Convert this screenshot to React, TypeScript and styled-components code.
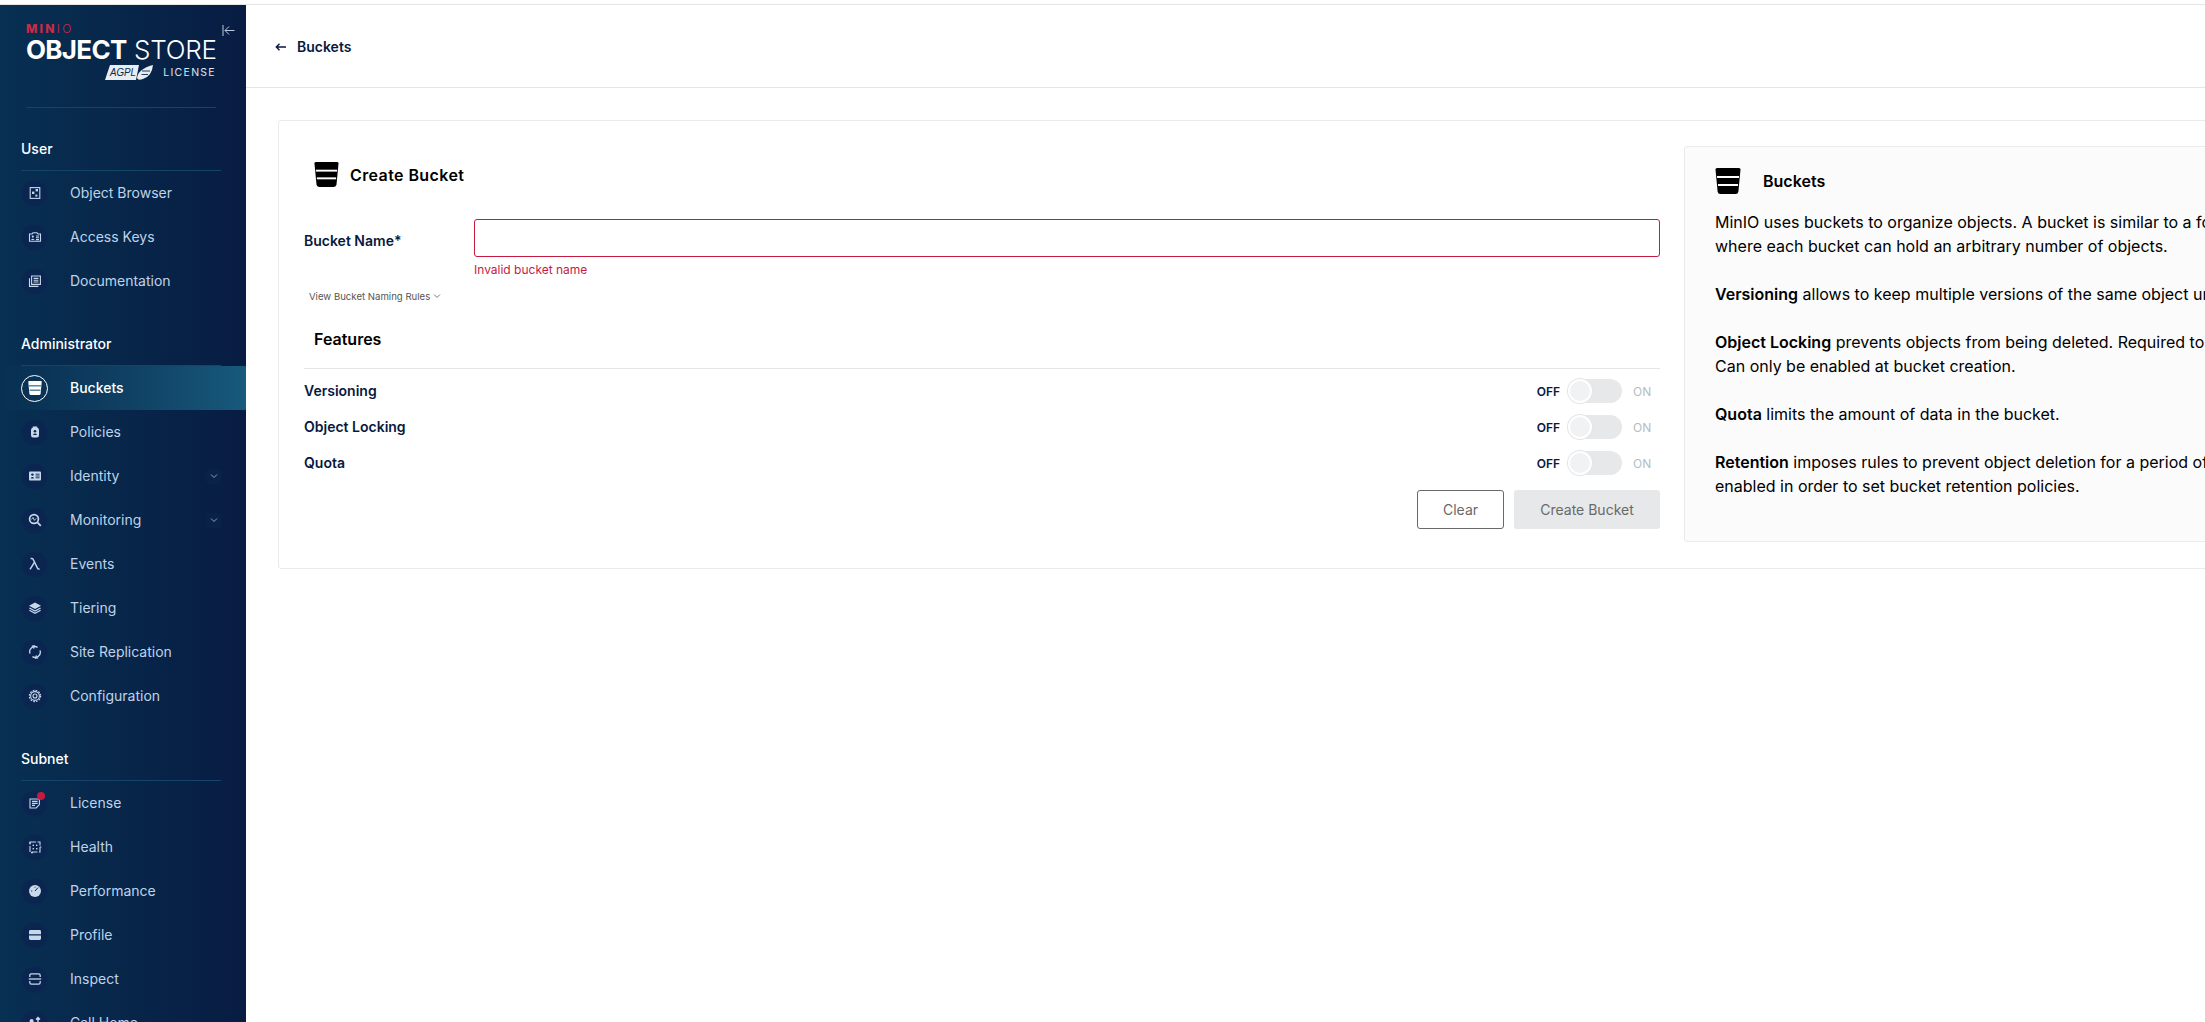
import React from 'react';
import styled, { createGlobalStyle } from 'styled-components';

const GlobalStyle = createGlobalStyle`
  html, body {
    margin: 0;
    padding: 0;
    height: 100%;
    overflow: hidden;
    background: #fff;
  }
  body {
    font-family: 'Inter', 'Liberation Sans', sans-serif;
  }
  * {
    box-sizing: border-box;
  }
`;

const BucketIcon: React.FC<{ size?: number; color?: string; line?: string }> = ({
  size = 26,
  color = '#000',
  line = '#fff',
}) => (
  <svg width={size} height={size} viewBox="0 0 26 26">
    <path
      d="M0.500 1.500 Q0.500 0 2 0 H24 Q25.500 0 25.500 1.500 L23.400 23.500 Q23.100 26 20.500 26 H5.500 Q2.900 26 2.600 23.500 Z"
      fill={color}
    />
    <rect x="2" y="8" width="22" height="2" fill={line} />
    <rect x="3" y="16" width="20" height="2" fill={line} />
  </svg>
);

const Svg: React.FC<{ children: React.ReactNode }> = ({ children }) => (
  <svg width="14" height="14" viewBox="0 0 14 14" fill="none" stroke="currentColor" strokeWidth="1.1">
    {children}
  </svg>
);

const icons: Record<string, React.ReactNode> = {
  browser: (
    <Svg>
      <rect x="2.200" y="1.600" width="9.600" height="10.800" />
      <g fill="currentColor" stroke="none">
        <rect x="7.600" y="3" width="2.400" height="2.400" />
        <rect x="4" y="5.600" width="2.400" height="2.400" />
        <rect x="7.400" y="8.600" width="2" height="2" />
      </g>
    </Svg>
  ),
  keys: (
    <Svg>
      <path d="M1.500 4 H4 L5 2.800 H9 L10 4 H12.500 V11.200 H1.500 Z" />
      <circle cx="4.800" cy="6.600" r="1.100" fill="currentColor" stroke="none" />
      <path d="M3 10 Q4.800 7.600 6.600 10 Z" fill="currentColor" stroke="none" />
      <path d="M8 6 H11 M8 7.800 H11 M8 9.600 H11" />
    </Svg>
  ),
  docs: (
    <Svg>
      <path d="M3.600 2 H12.400 V10.400 H3.600 Z" />
      <path d="M1.500 4.200 V12.400 H10.400" />
      <path d="M5.600 4.400 H10.400 M5.600 6.200 H10.400 M5.600 8 H10.400" />
    </Svg>
  ),
  policies: (
    <Svg>
      <path
        d="M4.800 2.600 V1.400 H9.200 V2.600 Q11 3.200 11 5 V10 Q11 12.600 9 12.600 H5 Q3 12.600 3 10 V5 Q3 3.200 4.800 2.600 Z"
        fill="currentColor"
        stroke="none"
      />
      <circle cx="7" cy="6.200" r="1.300" fill="#0a2650" stroke="none" />
      <path d="M4.800 10 Q7 7.200 9.200 10 Z" fill="#0a2650" stroke="none" />
    </Svg>
  ),
  identity: (
    <Svg>
      <rect x="1" y="2.600" width="12" height="8.800" rx="1" fill="currentColor" stroke="none" />
      <circle cx="4.400" cy="5.600" r="1.200" fill="#0a2650" stroke="none" />
      <path d="M2.600 9.400 Q4.400 6.600 6.200 9.400 Z" fill="#0a2650" stroke="none" />
      <path d="M7.600 5.200 H11.600 M7.600 7 H11.600 M7.600 8.800 H11.600" stroke="#0a2650" strokeWidth="0.9" />
    </Svg>
  ),
  monitoring: (
    <Svg>
      <circle cx="6" cy="6" r="4.400" strokeWidth="1.7" />
      <path d="M9.400 9.400 L12.800 12.800" strokeWidth="1.8" />
      <path d="M3.600 6.400 L5 4.400 L6.400 7.400 L8.200 5.400" strokeWidth="0.9" />
    </Svg>
  ),
  events: (
    <Svg>
      <path d="M2.600 1.600 H4 Q5 1.600 5.500 3 L9.400 11 Q10 12.400 11.600 12" strokeWidth="1.5" />
      <path d="M6.400 5.400 L2 12.400" strokeWidth="1.5" />
    </Svg>
  ),
  tiering: (
    <Svg>
      <path d="M7 1.600 L13 4.800 L7 8 L1 4.800 Z" fill="currentColor" stroke="none" />
      <path d="M1.400 7 L7 10 L12.600 7" strokeWidth="1.3" />
      <path d="M1.400 9.200 L7 12.200 L12.600 9.200" strokeWidth="1.3" />
    </Svg>
  ),
  replication: (
    <Svg>
      <path d="M2 8.600 A5.200 5.200 0 0 1 9.600 2.400" strokeWidth="1.3" />
      <path d="M12 5.400 A5.200 5.200 0 0 1 4.400 11.600" strokeWidth="1.3" />
      <path d="M3.800 1.200 L6.400 1 L5.600 3.600 M10.200 12.800 L7.600 13 L8.400 10.400" strokeWidth="1.2" />
    </Svg>
  ),
  configuration: (
    <Svg>
      <circle cx="7" cy="7" r="2" />
      <circle cx="7" cy="7" r="4.400" strokeWidth="1.1" />
      <circle cx="7" cy="7" r="5.600" strokeWidth="1.2" strokeDasharray="1.6 1.33" />
    </Svg>
  ),
  license: (
    <Svg>
      <path d="M2 3 H11.400 V8.600 L8.200 12 H2 Z" />
      <path d="M4 5.400 H9.600 M4 7.400 H9.600 M4 9.400 H7" />
    </Svg>
  ),
  health: (
    <Svg>
      <path d="M2 2 H12 V12 H2 Z" strokeDasharray="6 1.500" />
      <path d="M1 3 H3 M12 7 H13.400 M3 12.600 H5" />
      <g fill="currentColor" stroke="none">
        <rect x="4.600" y="4.600" width="1.400" height="1.400" />
        <rect x="8" y="4.600" width="1.400" height="1.400" />
        <rect x="4.600" y="8" width="1.400" height="1.400" />
        <rect x="8" y="8" width="1.400" height="1.400" />
      </g>
    </Svg>
  ),
  performance: (
    <Svg>
      <circle cx="7" cy="7" r="6" fill="currentColor" stroke="none" />
      <path d="M7 7 L10 3.600" stroke="#0a2650" strokeWidth="1" />
      <path d="M3 7 H4.200 M7 2.800 V3.800" stroke="#0a2650" strokeWidth="0.8" />
    </Svg>
  ),
  profile: (
    <Svg>
      <path d="M1 6.200 V3.400 Q1 2 2.400 2 H11.600 Q13 2 13 3.400 V6.200 Z" fill="currentColor" stroke="none" />
      <path d="M1 7.600 H13 V10.600 Q13 12 11.600 12 H2.400 Q1 12 1 10.600 Z" fill="currentColor" stroke="none" />
    </Svg>
  ),
  inspect: (
    <Svg>
      <path d="M1.800 5 V3.400 Q1.800 1.800 3.400 1.800 H10.600 Q12.200 1.800 12.200 3.400 V5" strokeWidth="1.3" />
      <path d="M1.800 9 V10.600 Q1.800 12.200 3.400 12.200 H10.600 Q12.200 12.200 12.200 10.600 V9" strokeWidth="1.3" />
      <path d="M0.800 7 H13.200" strokeWidth="1.3" />
    </Svg>
  ),
  callhome: (
    <Svg>
      <circle cx="3.600" cy="5" r="2" fill="currentColor" stroke="none" />
      <path d="M10 1.400 V8 M8 3.400 L10 1.400 L12 3.400" strokeWidth="1.4" />
      <path d="M1 12 Q3.600 7 6.400 12 Z" fill="currentColor" stroke="none" />
    </Svg>
  ),
};

type NavEntry = { label: string; icon: string; active?: boolean; expandable?: boolean; badge?: boolean };

const sections: { title: string; items: NavEntry[] }[] = [
  {
    title: 'User',
    items: [
      { label: 'Object Browser', icon: 'browser' },
      { label: 'Access Keys', icon: 'keys' },
      { label: 'Documentation', icon: 'docs' },
    ],
  },
  {
    title: 'Administrator',
    items: [
      { label: 'Buckets', icon: 'buckets', active: true },
      { label: 'Policies', icon: 'policies' },
      { label: 'Identity', icon: 'identity', expandable: true },
      { label: 'Monitoring', icon: 'monitoring', expandable: true },
      { label: 'Events', icon: 'events' },
      { label: 'Tiering', icon: 'tiering' },
      { label: 'Site Replication', icon: 'replication' },
      { label: 'Configuration', icon: 'configuration' },
    ],
  },
  {
    title: 'Subnet',
    items: [
      { label: 'License', icon: 'license', badge: true },
      { label: 'Health', icon: 'health' },
      { label: 'Performance', icon: 'performance' },
      { label: 'Profile', icon: 'profile' },
      { label: 'Inspect', icon: 'inspect' },
      { label: 'Call Home', icon: 'callhome' },
    ],
  },
];

const features = ['Versioning', 'Object Locking', 'Quota'];

const App: React.FC = () => {
  return (
    <Page>
      <GlobalStyle />
      <Sidebar>
        <LogoBlock>
          <CollapseButton>
            <svg width="13" height="13" viewBox="0 0 13 13" fill="none" stroke="#b9cbdd" strokeWidth="1">
              <path d="M1 1 V12 M12.500 6.500 H3 M7 2.500 L3 6.500 L7 10.500" />
            </svg>
          </CollapseButton>
          <MinioMark>
            MIN<MinioLight>IO</MinioLight>
          </MinioMark>
          <ProductName>
            <strong>OBJECT</strong> <span>STORE</span>
          </ProductName>
          <LicenseRow>
            <svg width="49" height="17" viewBox="0 0 49 17">
              <path d="M5 1 H34 L31 16 H0 Z" fill="#e8edf2" />
              <text
                x="5"
                y="12"
                fontFamily="Liberation Sans"
                fontStyle="italic"
                fontSize="11.5"
                textLength="26"
                lengthAdjust="spacingAndGlyphs"
                fill="#0a2a4e"
              >
                AGPL
              </text>
              <path d="M32 14 Q33 5 48 1 Q47 12 38 15 Q33 17 32 14 Z" fill="#e8edf2" />
              <path d="M37 7 H45 M36.500 10.500 H43" stroke="#0a2a4e" strokeWidth="0.9" />
            </svg>
            <LicenseText>LICENSE</LicenseText>
          </LicenseRow>
        </LogoBlock>

        {sections.map((section) => (
          <NavSection key={section.title}>
            <SectionTitle>{section.title}</SectionTitle>
            {section.items.map((item) => (
              <NavItem key={item.label} $active={item.active}>
                <IconCircle $active={item.active}>
                  {item.icon === 'buckets' ? (
                    <BucketIcon size={14} color="#fff" line="#175a7c" />
                  ) : (
                    icons[item.icon]
                  )}
                  {item.badge && <Badge />}
                </IconCircle>
                <NavLabel $active={item.active}>{item.label}</NavLabel>
                {item.expandable && (
                  <Expander>
                    <svg width="8" height="8" viewBox="0 0 8 8" fill="none" stroke="#aebfd2" strokeWidth="0.8">
                      <path d="M1 2.500 L4 5.500 L7 2.500" />
                    </svg>
                  </Expander>
                )}
              </NavItem>
            ))}
          </NavSection>
        ))}
      </Sidebar>

      <Main>
        <PageHeader>
          <BackLink>
            <svg width="11" height="8" viewBox="0 0 11 8" fill="none" stroke="#07193e" strokeWidth="1.4">
              <path d="M11 4 H1.500 M4.500 0.800 L1.300 4 L4.500 7.200" />
            </svg>
            Buckets
          </BackLink>
        </PageHeader>

        <Content>
          <Card>
            <FormColumn>
              <FormTitle>
                <BucketIcon size={25} />
                Create Bucket
              </FormTitle>

              <NameRow>
                <FieldLabel>Bucket Name*</FieldLabel>
                <FieldColumn>
                  <TextInput type="text" />
                  <FieldError>Invalid bucket name</FieldError>
                </FieldColumn>
              </NameRow>

              <RulesToggle>
                View Bucket Naming Rules
                <svg width="8" height="8" viewBox="0 0 8 8" fill="none" stroke="#555" strokeWidth="0.8">
                  <path d="M1 2.500 L4 5.500 L7 2.500" />
                </svg>
              </RulesToggle>

              <FeaturesTitle>Features</FeaturesTitle>

              <FeatureList>
                {features.map((feature) => (
                  <FeatureRow key={feature}>
                    <FeatureLabel>{feature}</FeatureLabel>
                    <SwitchGroup>
                      <OffLabel>OFF</OffLabel>
                      <SwitchTrack>
                        <SwitchKnob />
                      </SwitchTrack>
                      <OnLabel>ON</OnLabel>
                    </SwitchGroup>
                  </FeatureRow>
                ))}
              </FeatureList>

              <ButtonRow>
                <ClearButton type="button">Clear</ClearButton>
                <CreateButton type="button">Create Bucket</CreateButton>
              </ButtonRow>
            </FormColumn>

            <HelpBox>
              <HelpTitle>
                <BucketIcon />
                Buckets
              </HelpTitle>
              <HelpText>
                MinIO uses buckets to organize objects. A bucket is similar to a folder or directory in a filesystem,
                <br />
                where each bucket can hold an arbitrary number of objects.
              </HelpText>
              <HelpText>
                <b>Versioning</b> allows to keep multiple versions of the same object under the same key.
              </HelpText>
              <HelpText>
                <b>Object Locking</b> prevents objects from being deleted. Required to support retention and legal hold.
                <br />
                Can only be enabled at bucket creation.
              </HelpText>
              <HelpText>
                <b>Quota</b> limits the amount of data in the bucket.
              </HelpText>
              <HelpText>
                <b>Retention</b> imposes rules to prevent object deletion for a period of time. Versioning must be
                <br />
                enabled in order to set bucket retention policies.
              </HelpText>
            </HelpBox>
          </Card>
        </Content>
      </Main>
    </Page>
  );
};

export default App;

const Page = styled.div`
  display: flex;
  height: 100vh;
  padding-top: 4px;
  overflow: hidden;
  background: linear-gradient(#fff 0 4px, #e5e5e5 4px 5px, transparent 5px);
`;

const Sidebar = styled.aside`
  flex: none;
  width: 246px;
  margin-top: 1px;
  overflow: hidden;
  color: #fff;
  background: linear-gradient(90deg, #073052 0%, #081c42 100%);
`;

const LogoBlock = styled.div`
  position: relative;
  height: 125px;
  padding: 19px 30px 0 26px;
  display: flex;
  flex-direction: column;
  &::after {
    content: '';
    position: absolute;
    left: 26px;
    right: 30px;
    bottom: 22px;
    height: 1px;
    background: #14446a;
  }
`;

const CollapseButton = styled.div`
  position: absolute;
  top: 19px;
  left: 222px;
  line-height: 0;
`;

const MinioMark = styled.div`
  font-size: 12px;
  line-height: 10px;
  font-weight: 800;
  letter-spacing: 2.3px;
  color: #c72c48;
`;

const MinioLight = styled.span`
  font-weight: 300;
`;

const ProductName = styled.div`
  margin-top: 1px;
  font-size: 26px;
  line-height: 29px;
  white-space: nowrap;
  strong {
    font-weight: 700;
    letter-spacing: -0.7px;
  }
  span {
    font-weight: 300;
    letter-spacing: -0.2px;
  }
`;

const LicenseRow = styled.div`
  display: flex;
  justify-content: flex-end;
  align-items: center;
  gap: 9px;
`;

const LicenseText = styled.span`
  font-size: 10.5px;
  letter-spacing: 1.3px;
  color: #dfe6ee;
`;

const NavSection = styled.section`
  & + & {
    margin-top: 22px;
  }
`;

const SectionTitle = styled.div`
  display: flex;
  align-items: center;
  height: 41px;
  margin: 0 25px 0 21px;
  padding-bottom: 3px;
  font-size: 14px;
  font-weight: 500;
  color: #fff;
  border-bottom: 1px solid #14446a;
`;

const NavItem = styled.div<{ $active?: boolean }>`
  position: relative;
  display: flex;
  align-items: center;
  height: 44px;
  padding: 0 25px 0 21px;
  background: ${(p) =>
    p.$active ? 'linear-gradient(90deg, rgba(23, 90, 124, 0) 0%, #175a7c 100%)' : 'transparent'};
`;

const IconCircle = styled.div<{ $active?: boolean }>`
  position: relative;
  flex: none;
  display: flex;
  align-items: center;
  justify-content: center;
  width: 27px;
  height: 27px;
  border-radius: 50%;
  color: #c7d8ea;
  background: ${(p) => (p.$active ? 'transparent' : '#0a2650')};
  border: ${(p) => (p.$active ? '1px solid #fff' : '1px solid #0b2a52')};
`;

const Badge = styled.span`
  position: absolute;
  top: 1px;
  right: 2px;
  width: 8px;
  height: 8px;
  border-radius: 50%;
  background: #c51b3f;
`;

const NavLabel = styled.span<{ $active?: boolean }>`
  margin: 0 0 1px 22px;
  font-size: 14px;
  font-weight: ${(p) => (p.$active ? 500 : 400)};
  color: ${(p) => (p.$active ? '#fff' : '#bfd3e8')};
`;

const Expander = styled.span`
  margin-left: auto;
  display: flex;
  align-items: center;
  justify-content: center;
  width: 15px;
  height: 15px;
  border-radius: 2px;
  background: #0a2149;
`;

const Main = styled.main`
  flex: 1;
  min-width: 0;
  overflow: hidden;
  padding-top: 1px;
`;

const PageHeader = styled.header`
  display: flex;
  align-items: center;
  height: 83px;
  padding: 1px 0 0 29px;
  border-bottom: 1px solid #e5e5e5;
`;

const BackLink = styled.div`
  display: flex;
  align-items: center;
  gap: 11px;
  font-size: 14px;
  font-weight: 600;
  color: #07193e;
`;

const Content = styled.div`
  padding: 32px 0 0 32px;
`;

const Card = styled.div`
  display: flex;
  align-items: flex-start;
  width: 2400px;
  height: 449px;
  border: 1px solid #eaeaea;
  border-radius: 3px;
`;

const FormColumn = styled.div`
  flex: none;
  width: 1381px;
  padding: 0 0 0 25px;
`;

const FormTitle = styled.h2`
  display: flex;
  align-items: center;
  gap: 11px;
  height: 25px;
  margin: 41px 0 0 10px;
  font-size: 16px;
  font-weight: 600;
  letter-spacing: 0.4px;
  color: #000;
`;

const NameRow = styled.div`
  display: flex;
  margin-top: 32px;
`;

const FieldLabel = styled.label`
  flex: none;
  display: flex;
  align-items: center;
  width: 170px;
  height: 38px;
  margin-top: 2px;
  font-size: 14px;
  font-weight: 600;
  color: #07193e;
`;

const FieldColumn = styled.div`
  flex: 1;
`;

const TextInput = styled.input`
  display: block;
  width: 100%;
  height: 38px;
  border: 1px solid #c51b3f;
  border-radius: 3px;
  background: #fff;
  outline: none;
`;

const FieldError = styled.div`
  margin-top: 5px;
  font-size: 12px;
  line-height: 15px;
  color: #c51b3f;
`;

const RulesToggle = styled.div`
  display: flex;
  align-items: center;
  gap: 3px;
  margin: 12px 0 0 5px;
  height: 14px;
  font-size: 9.6px;
  color: #555;
`;

const FeaturesTitle = styled.h3`
  display: flex;
  align-items: center;
  height: 52px;
  margin: 14px 0 0;
  padding: 0 0 7px 10px;
  font-size: 16px;
  font-weight: 600;
  color: #000;
  border-bottom: 1px solid #e5e5e5;
`;

const FeatureList = styled.div`
  margin-top: 4px;
`;

const FeatureRow = styled.div`
  display: flex;
  align-items: center;
  justify-content: space-between;
  height: 36px;
  padding-right: 8px;
`;

const FeatureLabel = styled.span`
  margin-bottom: 1px;
  font-size: 14px;
  font-weight: 600;
  color: #07193e;
`;

const SwitchGroup = styled.div`
  display: flex;
  align-items: center;
`;

const OffLabel = styled.span`
  font-size: 12px;
  font-weight: 600;
  color: #07193e;
`;

const OnLabel = styled.span`
  width: 19px;
  margin-left: 11px;
  font-size: 12px;
  color: #b4bcc4;
`;

const SwitchTrack = styled.div`
  width: 54px;
  height: 24px;
  margin-left: 8px;
  border-radius: 12px;
  background: #e6e8e9;
`;

const SwitchKnob = styled.div`
  width: 24px;
  height: 24px;
  border-radius: 50%;
  background: #f0f2f4;
  border: 2px solid #fff;
  box-shadow: 0 0 0 1px #e5e5e5;
`;

const ButtonRow = styled.div`
  display: flex;
  justify-content: flex-end;
  gap: 10px;
  margin-top: 9px;
`;

const ClearButton = styled.button`
  width: 87px;
  height: 39px;
  padding: 0;
  font-family: inherit;
  font-size: 14px;
  color: #696969;
  background: #fff;
  border: 1px solid #696969;
  border-radius: 3px;
`;

const CreateButton = styled.button`
  width: 146px;
  height: 39px;
  padding: 0;
  font-family: inherit;
  font-size: 14px;
  color: #696969;
  background: #e6e8e9;
  border: none;
  border-radius: 3px;
`;

const HelpBox = styled.aside`
  flex: none;
  width: 900px;
  height: 396px;
  margin: 25px 0 0 24px;
  padding: 21px 30px;
  background: #fbfbfb;
  border: 1px solid #eaeaea;
  border-radius: 3px;
`;

const HelpTitle = styled.h3`
  display: flex;
  align-items: center;
  gap: 22px;
  height: 26px;
  margin: 0 0 16px;
  font-size: 16px;
  font-weight: 600;
  color: #000;
`;

const HelpText = styled.p`
  margin: 0 0 24px;
  font-size: 16px;
  line-height: 24px;
  color: #000;
  white-space: nowrap;
  b {
    font-weight: 600;
  }
`;
